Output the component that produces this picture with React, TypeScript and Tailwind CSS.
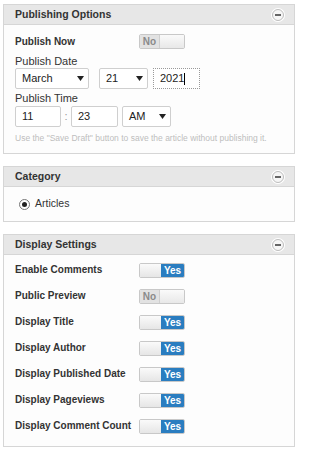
import React from "react";

const font = { fontFamily: '"Liberation Sans", Arial, sans-serif' };

function Minus() {
  return (
    <div className="w-[12px] h-[12px] rounded-full bg-[#f6f6f6] border border-[#bdbdbd] flex items-center justify-center shadow-[0_0_0_1px_#ffffff]">
      <div className="w-[6px] h-[2px] bg-[#666]" />
    </div>
  );
}

function Header({ title }: { title: string }) {
  return (
    <div className="h-[20px] bg-[#e7e7e7] border-b border-[#d6d6d6] flex items-center justify-between pl-[11px] pr-[10px]">
      <span className="text-[10.5px] font-bold text-[#333] leading-none">{title}</span>
      <Minus />
    </div>
  );
}

function Toggle({ on }: { on: boolean }) {
  if (on) {
    return (
      <div className="w-[46px] h-[15px] flex border border-[#c8c8c8] rounded-[2px] overflow-hidden shrink-0">
        <div className="w-[21px] h-full bg-gradient-to-b from-[#fafafa] to-[#e6e6e6]" />
        <div className="flex-1 h-full bg-[#2a7dc0] flex items-center justify-center text-white font-bold text-[10px] leading-none">
          Yes
        </div>
      </div>
    );
  }
  return (
    <div className="w-[46px] h-[15px] flex border border-[#c8c8c8] rounded-[2px] overflow-hidden shrink-0">
      <div className="w-[20px] h-full bg-[#e2e2e2] flex items-center justify-center text-[#8a8a8a] font-bold text-[10px] leading-none border-r border-[#cfcfcf]">
        No
      </div>
      <div className="flex-1 h-full bg-gradient-to-b from-[#fafafa] to-[#e8e8e8]" />
    </div>
  );
}

function Arrow() {
  return (
    <svg width="7" height="5" viewBox="0 0 7 5">
      <path d="M0 0 L7 0 L3.5 5 Z" fill="#222" />
    </svg>
  );
}

function Select({ w, text }: { w: string; text: string }) {
  return (
    <div className={`${w} h-[21px] border border-[#cfcfcf] rounded-[2px] bg-white flex items-center justify-between pl-[6px] pr-[4px] text-[11px] text-[#222]`}>
      <span>{text}</span>
      <Arrow />
    </div>
  );
}

function Panel({ title, children, className }: { title: string; children: React.ReactNode; className?: string }) {
  return (
    <div className={`w-[292px] border border-[#d6d6d6] bg-[#fdfdfd] ${className ?? ""}`}>
      <Header title={title} />
      {children}
    </div>
  );
}

function Row({ label, on }: { label: string; on: boolean }) {
  return (
    <div className="h-[26px] flex items-start">
      <span className="w-[124px] whitespace-nowrap text-[10px] font-bold text-[#333] leading-[13px]">{label}</span>
      <Toggle on={on} />
    </div>
  );
}

export default function App() {
  return (
    <div className="w-[300px] h-[452px] bg-white pl-[3px] pt-[4px]" style={font}>
      <Panel title="Publishing Options">
        <div className="pl-[11px] pb-[9px]">
          <div className="mt-[9px] h-[15px] flex items-center">
            <span className="w-[124px] text-[10px] font-bold text-[#333]">Publish Now</span>
            <Toggle on={false} />
          </div>
          <div className="mt-[5px] h-[14px] text-[11px] leading-[14px] text-[#333]">Publish Date</div>
          <div className="flex items-center">
            <Select w="w-[74px]" text="March" />
            <div className="ml-[10px]">
              <Select w="w-[49px]" text="21" />
            </div>
            <div className="ml-[5px] w-[47px] h-[21px] border border-dotted border-[#999] bg-white flex items-center pl-[6px] text-[11px] text-[#222]">
              <span>2021</span>
              <span className="w-px h-[12px] bg-black" />
            </div>
          </div>
          <div className="mt-[2px] h-[14px] text-[11px] leading-[14px] text-[#333]">Publish Time</div>
          <div className="mt-[1px] flex items-center">
            <div className="w-[46px] h-[21px] border border-[#cfcfcf] rounded-[2px] bg-white flex items-center pl-[6px] text-[11px] text-[#222]">11</div>
            <span className="w-[10px] text-center text-[11px] text-[#999]">:</span>
            <div className="w-[47px] h-[21px] border border-[#cfcfcf] rounded-[2px] bg-white flex items-center pl-[6px] text-[11px] text-[#222]">23</div>
            <div className="ml-[4px]">
              <Select w="w-[49px]" text="AM" />
            </div>
          </div>
          <div className="mt-[6px] whitespace-nowrap text-[8.5px] leading-[11px] text-[#bdbdbd]">
            Use the "Save Draft" button to save the article without publishing it.
          </div>
        </div>
      </Panel>

      <Panel title="Category" className="mt-[12px]">
        <div className="h-[34px] flex items-center pl-[15px]">
          <div className="w-[11px] h-[11px] rounded-full border border-[#777] bg-white flex items-center justify-center">
            <div className="w-[5px] h-[5px] rounded-full bg-[#222]" />
          </div>
          <span className="ml-[5px] text-[10.5px] text-[#333]">Articles</span>
        </div>
      </Panel>

      <Panel title="Display Settings" className="mt-[12px]">
        <div className="pl-[11px] pt-[8px] pb-[1px]">
          <Row label="Enable Comments" on={true} />
          <Row label="Public Preview" on={false} />
          <Row label="Display Title" on={true} />
          <Row label="Display Author" on={true} />
          <Row label="Display Published Date" on={true} />
          <Row label="Display Pageviews" on={true} />
          <Row label="Display Comment Count" on={true} />
        </div>
      </Panel>
    </div>
  );
}
